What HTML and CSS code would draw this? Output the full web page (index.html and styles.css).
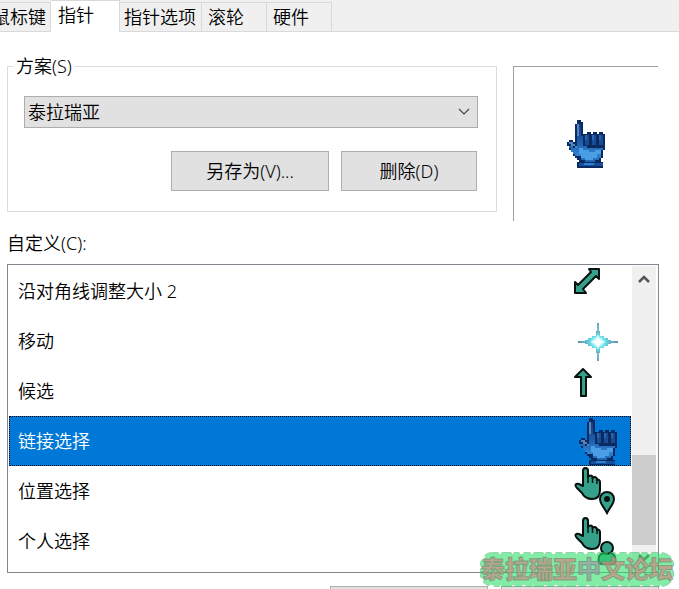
FILE: index.html
```html
<!DOCTYPE html>
<html lang="zh-CN">
<head>
<meta charset="utf-8">
<meta name="viewport" content="width=device-width, initial-scale=1">
<title>鼠标 属性</title>
<link rel="stylesheet" href="styles.css">
</head>
<body>
<svg class="defs" aria-hidden="true">
  <defs>
    <linearGradient id="palm" x1="0" y1="0" x2="0" y2="1">
      <stop offset="0" stop-color="#123f80"/>
      <stop offset="0.5" stop-color="#1c5fae"/>
      <stop offset="0.8" stop-color="#3282d0"/>
      <stop offset="1" stop-color="#1d62b2"/>
    </linearGradient>
    <linearGradient id="ray-h"><stop offset="0" stop-color="#5b8fae"/><stop offset="0.5" stop-color="#8ff4fa"/><stop offset="1" stop-color="#5b8fae"/></linearGradient>
    <linearGradient id="ray-v" x1="0" y1="0" x2="0" y2="1"><stop offset="0" stop-color="#6d9fbb"/><stop offset="0.5" stop-color="#8ff4fa"/><stop offset="1" stop-color="#6d9fbb"/></linearGradient>
    <radialGradient id="glow"><stop offset="0" stop-color="#fff"/><stop offset="0.25" stop-color="#d8ffff"/><stop offset="0.6" stop-color="#5fdce8"/><stop offset="1" stop-color="#6fa9c4"/></radialGradient>
    <symbol id="pixel-hand" viewBox="0 0 38 48">
      <path fill="#0a2a60" d="M10 0h4v2h2v12h4v-2h4v2h2v-2h4v2h2v-2h4v2h2v16h-2v8h-2v4h2v6H10v-6h2v-2h-2v-2H8v-2H6v-4H4v-2H2v-4H0v-4h2v-2h4v2h2V4h2z"/>
      <path fill="url(#palm)" d="M10 4h4v12h2v10h4v2h16v2h-2v8h-2v2h-4v2h-10v-2h-4v-4H8v-2H6v-2H4v-4H2v-2h4v2h4z"/>
      <path fill="#5585bd" d="M10 4h2v12h-2zM2 22h4v2h2v2h2v2H8v-2H4v-2H2z"/>
      <path fill="#164d96" d="M18 15h4v10h-4zM25 15h4v10h-4zM32 15h4v10h-4z"/>
      <path fill="#2a66ab" d="M18 15h2v5h-2zM25 15h2v5h-2zM32 15h2v5h-2z"/>
      <path fill="#4a9fe4" d="M12 28h4v2h6v2h6v-2h6v4h-4v4h-4v2h-8v-2h-4v-4h-2z"/>
      <path fill="#174f9c" d="M12 43h24v3H12z"/>
      <path fill="#2e80d0" d="M17 43h10v2H17z"/>
    </symbol>
    <symbol id="green-hand" viewBox="0 0 28 34">
      <path d="M9 19V4c0-4 5-4 5 0v6c1-2 4-2 4.500 0v1c1-2 4-1 4.500 1v1c1-1 3 0 3 2v8c0 6-3 9-8 9-5 0-8-2-10-6l-5-5c-3-3-1-5 2-4z" fill="#36a18b" stroke="#06110f" stroke-width="2" stroke-linejoin="round"/>
      <path d="M14 10v6M18.500 11v5M23 13v4" stroke="#06110f" stroke-width="1.500"/>
    </symbol>
  </defs>
</svg>

<nav class="tabs" role="tablist">
  <button class="tab tab-first" role="tab">鼠标键</button>
  <button class="tab tab-active" role="tab" aria-selected="true">指针</button>
  <button class="tab tab-wide" role="tab">指针选项</button>
  <button class="tab" role="tab">滚轮</button>
  <button class="tab" role="tab">硬件</button>
</nav>

<main class="page">
  <div class="top">
    <fieldset class="scheme">
      <legend><label for="scheme">方案(S)</label></legend>
      <div class="select-wrap">
        <select id="scheme"><option>泰拉瑞亚</option></select>
        <svg class="chevron" viewBox="0 0 12 8"><path d="M1 1l5 5 5-5" fill="none" stroke="#444" stroke-width="1.200"/></svg>
      </div>
      <div class="actions">
        <button class="btn btn-save">另存为(V)...</button>
        <button class="btn">删除(D)</button>
      </div>
    </fieldset>
    <div class="preview"><svg class="hand"><use href="#pixel-hand"/></svg></div>
  </div>

  <div class="custom-label" id="custom">自定义(C):</div>
  <div class="listbox">
    <ul class="items" role="listbox" aria-labelledby="custom">
      <li class="item" role="option"><span>沿对角线调整大小 2</span>
        <svg class="cursor" viewBox="0 0 48 48"><path d="M16 2h10v10l-3-3L10 22l3 4H2V15l3 3L18 5z" fill="#36a18b" stroke="#06110f" stroke-width="2" stroke-linejoin="round"/></svg></li>
      <li class="item" role="option"><span>移动</span>
        <svg class="cursor" viewBox="0 0 48 48"><path d="M5 24h40v2H5z" fill="url(#ray-h)"/><path d="M24 6h2v38h-2z" fill="url(#ray-v)"/><path d="M23 14h4v5h4v2h4v2h3v4h-3v2h-4v2h-4v5h-4v-5h-4v-2h-4v-2h-3v-4h3v-2h4v-2h4z" fill="url(#glow)"/><path d="M25 17l2 6 6 2-6 2-2 6-2-6-6-2 6-2z" fill="#fff" opacity=".75"/></svg></li>
      <li class="item" role="option"><span>候选</span>
        <svg class="cursor" viewBox="0 0 48 48"><path d="M10 2l8 8h-5v19H8V10H2z" fill="#36a18b" stroke="#06110f" stroke-width="2" stroke-linejoin="round"/></svg></li>
      <li class="item item-selected" role="option" aria-selected="true"><span>链接选择</span>
        <svg class="cursor" viewBox="0 0 48 48"><use href="#pixel-hand" x="6" y="1" width="38" height="48"/></svg></li>
      <li class="item" role="option"><span>位置选择</span>
        <svg class="cursor" viewBox="0 0 48 48"><use href="#green-hand" x="1" y="0" width="28" height="34"/><path d="M34 46c-3-6-7-9-7-14a7 7 0 0 1 14 0c0 5-4 8-7 14z" fill="#36a18b" stroke="#06110f" stroke-width="2"/><circle cx="34" cy="32" r="3" fill="#06110f"/></svg></li>
      <li class="item" role="option"><span>个人选择</span>
        <svg class="cursor" viewBox="0 0 48 48"><use href="#green-hand" x="1" y="0" width="28" height="34"/><path d="M26 46c-2-9 3-10 8-10s10 1 8 10c-4 2-12 2-16 0z" fill="#36a18b" stroke="#06110f" stroke-width="2"/><circle cx="34" cy="31" r="6" fill="#36a18b" stroke="#06110f" stroke-width="2"/></svg></li>
    </ul>
    <div class="scrollbar">
      <button class="arrow" aria-label="向上滚动"><svg viewBox="0 0 12 10"><path d="M1 8l5-5 5 5" fill="none" stroke="#555" stroke-width="2.500"/></svg></button>
      <div class="track"><div class="thumb"></div></div>
      <button class="arrow" aria-label="向下滚动"><svg viewBox="0 0 12 10"><path d="M1 2l5 5 5-5" fill="none" stroke="#555" stroke-width="2.500"/></svg></button>
    </div>
  </div>

  <div class="footer">
    <button class="btn btn-save" aria-label="使用默认值"></button>
    <button class="btn btn-save" aria-label="浏览"></button>
  </div>
</main>

<svg class="watermark" viewBox="0 0 200 40" role="img" aria-label="泰拉瑞亚中文论坛">
  <g opacity=".6">
    <rect x="6" y="5" width="190" height="31" rx="11" fill="none" stroke="#4c9a68" stroke-width="4" stroke-dasharray="4 6 7 5 3 7" stroke-linecap="round"/>
    <rect x="6" y="5" width="190" height="31" rx="11" fill="#32e06c" stroke="#32e06c" stroke-width="3" stroke-dasharray="4 6 7 5 3 7" stroke-linecap="round"/>
  </g>
  <text class="mark-text" x="5" y="29">泰拉瑞亚<tspan class="mark-mid">中</tspan>文论坛</text>
</svg>
</body>
</html>
```
FILE: styles.css
```css
* { box-sizing: border-box; }

html, body { height: 100%; }

body {
  margin: 0;
  overflow: hidden;
  position: relative;
  background: #fff;
  color: #000;
  font: 350 18px/24px "Noto Sans", "Noto Sans CJK SC", sans-serif;
}

button, select { font: inherit; color: inherit; }

.defs { position: absolute; width: 0; height: 0; }

.tabs {
  display: flex;
  align-items: flex-end;
  height: 32px;
  background: #f0f0f0;
  box-shadow: inset 0 -1px #d9d9d9;
}

.tab {
  flex: none;
  height: 30px;
  width: 65px;
  padding: 0 0 0 6px;
  border: 1px solid #d9d9d9;
  border-left: 0;
  background: #f0f0f0;
  text-align: left;
  white-space: nowrap;
}

.tab-first { width: 51px; padding: 0 4px 0 0; display: flex; justify-content: flex-end; align-items: center; }
.tab-wide { width: 82px; padding-left: 4px; }
.tab-active {
  width: 69px;
  height: 32px;
  padding: 0 0 3px 7px;
  border-bottom: 0;
  background: #fff;
}

.page { padding: 22px 20px 0 7px; }

.top { display: flex; gap: 16px; }

.scheme {
  flex: 1;
  min-width: 0;
  height: 158px;
  margin: 0;
  padding: 18px 18px 0 16px;
  border: 1px solid #dcdcdc;
}

.scheme legend { margin-left: -11px; padding: 0 3px; }

.select-wrap { position: relative; }

.select-wrap select {
  display: block;
  width: 100%;
  height: 32px;
  padding: 0 3px;
  border: 1px solid #adadad;
  border-radius: 0;
  background: #e1e1e1;
  appearance: none;
}

.chevron { position: absolute; right: 8px; top: 12px; width: 12px; height: 8px; pointer-events: none; }

.actions {
  display: flex;
  justify-content: flex-end;
  gap: 12px;
  margin: 23px 1px 0 0;
}

.btn {
  width: 136px;
  height: 40px;
  padding: 0;
  border: 1px solid #adadad;
  background: #e1e1e1;
}

.btn-save { width: 158px; }

.preview {
  display: flex;
  align-items: center;
  justify-content: center;
  width: 145px;
  height: 155px;
  margin: 12px 1px 0 0;
  border-top: 1px solid #a0a0a0;
  border-left: 1px solid #a0a0a0;
}

.hand { width: 38px; height: 48px; }

.custom-label { margin: 10px 0 9px; }

.listbox {
  display: flex;
  padding: 1px;
  border: 1px solid #828790;
}

.items {
  flex: 1;
  margin: 0;
  padding: 0 0 5px;
  list-style: none;
}

.item {
  display: flex;
  align-items: center;
  justify-content: space-between;
  height: 50px;
  padding: 0 10px 0 9px;
}

.item-selected {
  background: #0078d7;
  color: #fff;
  outline: 1px dotted #000;
  outline-offset: -1px;
}

.cursor { width: 48px; height: 48px; }

.scrollbar {
  display: flex;
  flex-direction: column;
  width: 24px;
  margin: 0 1px;
  background: #f0f0f0;
}

.arrow {
  display: flex;
  align-items: center;
  justify-content: center;
  height: 26px;
  padding: 0;
  border: 0;
  background: none;
}

.arrow svg { width: 12px; height: 10px; }

.track {
  flex: 1;
  display: flex;
  flex-direction: column;
  justify-content: flex-end;
}

.thumb { height: 90px; background: #cdcdcd; }

.footer {
  display: flex;
  justify-content: flex-end;
  gap: 13px;
  height: 3px;
  margin-top: 13px;
  overflow: hidden;
}

.watermark {
  position: absolute;
  right: 3px;
  bottom: 0;
  width: 200px;
  height: 40px;
}

.mark-text {
  font: 900 24px "Noto Sans CJK SC", sans-serif;
  fill: #d08a80;
  fill-opacity: .7;
  stroke: #6d8f76;
  stroke-opacity: .7;
  stroke-width: 1px;
}

.mark-mid { fill: #9a9aa4; }
```
